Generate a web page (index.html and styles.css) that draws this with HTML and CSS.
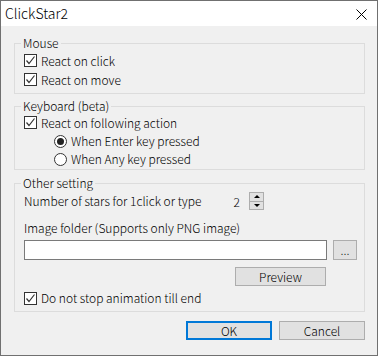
FILE: index.html
```html
<!DOCTYPE html>
<html lang="en">
<head>
  <meta charset="UTF-8" />
  <title>ClickStar2</title>
  <link rel="stylesheet" href="styles.css">
</head>
<body>
  <div class="window">
    <div class="titlebar">
      <span class="title">ClickStar2</span>
      <svg class="close" width="11" height="11" viewBox="0 0 11 11">
        <path d="M0.5 0.5 L10.5 10.5 M10.5 0.5 L0.5 10.5" stroke="#000" stroke-width="1" fill="none"/>
      </svg>
    </div>

    <div class="content">
      <fieldset class="group group-mouse">
        <legend>Mouse</legend>
        <label class="check row19"><span class="box on"><svg width="11" height="11" viewBox="0 0 11 11"><path d="M1.5 5.5 L4 8.5 L9.5 1.5" stroke="#333" stroke-width="1.2" fill="none"/></svg></span>React on click</label>
        <label class="check row19"><span class="box on"><svg width="11" height="11" viewBox="0 0 11 11"><path d="M1.5 5.5 L4 8.5 L9.5 1.5" stroke="#333" stroke-width="1.2" fill="none"/></svg></span>React on move</label>
      </fieldset>

      <fieldset class="group group-keys">
        <legend>Keyboard (beta)</legend>
        <label class="check row19"><span class="box on"><svg width="11" height="11" viewBox="0 0 11 11"><path d="M1.5 5.5 L4 8.5 L9.5 1.5" stroke="#333" stroke-width="1.2" fill="none"/></svg></span>React on following action</label>
        <label class="radio"><span class="dot on"></span>When Enter key pressed</label>
        <label class="radio"><span class="dot"></span>When Any key pressed</label>
      </fieldset>

      <fieldset class="group group-other">
        <legend>Other setting</legend>
        <div class="stars-row">
          <span class="stars-label">Number of stars for 1click or type</span>
          <span class="stars-value">2</span>
          <span class="spinner">
            <span class="spin up"></span>
            <span class="spin down"></span>
          </span>
        </div>
        <div class="folder-label">Image folder (Supports only PNG image)</div>
        <div class="folder-row">
          <input class="folder-input" type="text" />
          <button class="btn browse">...</button>
        </div>
        <div class="preview-row">
          <button class="btn preview">Preview</button>
        </div>
        <label class="check row18"><span class="box on"><svg width="11" height="11" viewBox="0 0 11 11"><path d="M1.5 5.5 L4 8.5 L9.5 1.5" stroke="#333" stroke-width="1.2" fill="none"/></svg></span>Do not stop animation till end</label>
      </fieldset>

      <div class="actions">
        <button class="btn default">OK</button>
        <button class="btn">Cancel</button>
      </div>
    </div>
  </div>
</body>
</html>
```

FILE: styles.css
```css
* {
  box-sizing: border-box;
}
body {
  margin: 0;
  font-family: "Noto Sans CJK JP", sans-serif;
  font-size: 12px;
  font-weight: 300;
  color: #000;
}
.window {
  width: 378px;
  height: 356px;
  border: 1px solid #707070;
  background: #f0f0f0;
}
.titlebar {
  height: 25px;
  background: #fff;
  display: flex;
  align-items: center;
  justify-content: space-between;
  padding: 0 10px 0 4px;
}
.title {
  font-size: 14px;
  line-height: 25px;
}
.close {
  display: block;
  margin-top: 1px;
}
.content {
  padding: 0 12px 0 13px;
}
.group {
  margin: 0;
  padding: 0 7px 0 9px;
  border: 1px solid #dcdcdc;
  min-width: 0;
}
.group legend {
  margin-left: -3px;
  padding: 0 2px;
  line-height: 14px;
  height: 14px;
}
.group-mouse {
  margin-top: 10px;
  padding-top: 1px;
  padding-bottom: 4px;
}
.group-keys {
  margin-top: 5px;
  padding-bottom: 1px;
}
.group-other {
  margin-top: 6px;
  padding-top: 1px;
  padding-bottom: 4px;
}
.check, .radio {
  display: flex;
  align-items: center;
  line-height: 14px;
}
.row19 { height: 19px; }
.row18 { height: 18px; margin-top: 3px; }
.radio {
  height: 18px;
  padding-left: 30px;
}
.box {
  width: 13px;
  height: 13px;
  border: 1px solid #333;
  background: #fff;
  margin-right: 4px;
  display: flex;
  align-items: center;
  justify-content: center;
}
.box svg {
  display: block;
}
.dot {
  width: 13px;
  height: 13px;
  border: 1px solid #333;
  border-radius: 50%;
  background: #fff;
  margin-right: 4px;
  display: flex;
  align-items: center;
  justify-content: center;
}
.dot.on::after {
  content: "";
  width: 7px;
  height: 7px;
  border-radius: 50%;
  background: #222;
}
.stars-row {
  display: flex;
  align-items: center;
  height: 20px;
}
.stars-label {
  width: 204px;
  line-height: 14px;
}
.stars-value {
  width: 12px;
  text-align: right;
}
.spinner {
  margin-left: 9px;
  width: 15px;
  height: 18px;
  display: flex;
  flex-direction: column;
}
.spin {
  flex: 1;
  border: 1px solid #adadad;
  background: #e1e1e1;
  display: flex;
  align-items: center;
  justify-content: center;
}
.spin.down {
  border-top: none;
}
.spin.up::after {
  content: "";
  border-left: 3px solid transparent;
  border-right: 3px solid transparent;
  border-bottom: 3px solid #000;
}
.spin.down::after {
  content: "";
  border-left: 3px solid transparent;
  border-right: 3px solid transparent;
  border-top: 3px solid #000;
}
.folder-label {
  margin-top: 10px;
  line-height: 14px;
}
.folder-row {
  display: flex;
  gap: 6px;
  margin-top: 5px;
}
.folder-input {
  width: 303px;
  height: 20px;
  border: 1px solid #7a7a7a;
  background: #fff;
  margin: 0;
  padding: 0 3px;
  font: inherit;
}
.btn {
  font-family: "Noto Sans CJK JP", sans-serif;
  font-size: 12px;
  font-weight: 300;
  color: #000;
  background: #e1e1e1;
  border: 1px solid #adadad;
  margin: 0;
  padding: 0;
  line-height: 14px;
}
.browse {
  width: 24px;
  height: 20px;
}
.preview-row {
  display: flex;
  padding-left: 211px;
  margin-top: 7px;
}
.preview {
  width: 91px;
  height: 19px;
}
.actions {
  display: flex;
  justify-content: flex-end;
  gap: 7px;
  margin-top: 9px;
}
.actions .btn {
  width: 86px;
  height: 19px;
}
.btn.default {
  border: 2px solid #0078d7;
}
```
